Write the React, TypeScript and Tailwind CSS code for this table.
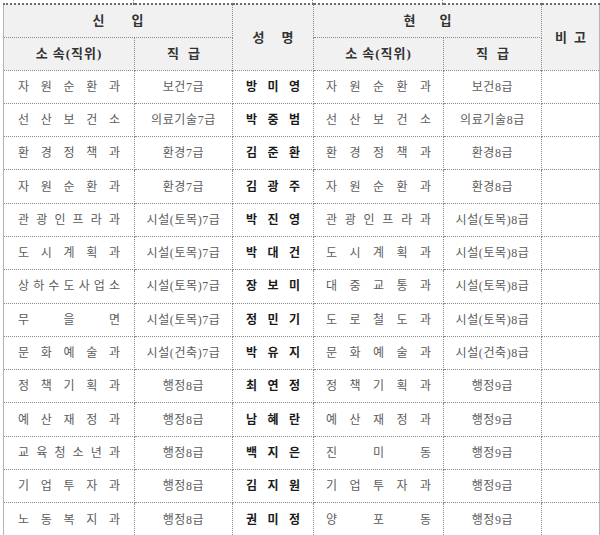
const rows = [
  ['자원순환과', '보건7급', '방미영', '자원순환과', '보건8급'],
  ['선산보건소', '의료기술7급', '박중범', '선산보건소', '의료기술8급'],
  ['환경정책과', '환경7급', '김준환', '환경정책과', '환경8급'],
  ['자원순환과', '환경7급', '김광주', '자원순환과', '환경8급'],
  ['관광인프라과', '시설(토목)7급', '박진영', '관광인프라과', '시설(토목)8급'],
  ['도시계획과', '시설(토목)7급', '박대건', '도시계획과', '시설(토목)8급'],
  ['상하수도사업소', '시설(토목)7급', '장보미', '대중교통과', '시설(토목)8급'],
  ['무을면', '시설(토목)7급', '정민기', '도로철도과', '시설(토목)8급'],
  ['문화예술과', '시설(건축)7급', '박유지', '문화예술과', '시설(건축)8급'],
  ['정책기획과', '행정8급', '최연정', '정책기획과', '행정9급'],
  ['예산재정과', '행정8급', '남혜란', '예산재정과', '행정9급'],
  ['교육청소년과', '행정8급', '백지은', '진미동', '행정9급'],
  ['기업투자과', '행정8급', '김지원', '기업투자과', '행정9급'],
  ['노동복지과', '행정8급', '권미정', '양포동', '행정9급'],
];

// spreads characters evenly across the cell, like hwp "배분 정렬"
function Spread({ text, className }: { text: string; className: string }) {
  return (
    <div className={'flex justify-between ' + className}>
      {text.split('').map((ch, i) => (
        <span key={i}>{ch}</span>
      ))}
    </div>
  );
}

const cell = 'border border-dotted border-[#8a8a8a] p-0 align-middle';
const head = cell + ' bg-[#f1f1f1] text-[13px] font-bold text-[#333] text-center';

export default function App() {
  return (
    <div
      className="w-[600px] h-[535px] bg-white overflow-hidden"
      style={{ fontFamily: "'Liberation Serif', 'Noto Sans CJK KR', serif" }}
    >
      <div className="flex h-[3px] pl-[3px]">
        <div className="w-[131px] border-r border-dotted border-[#8a8a8a]" />
        <div className="w-[179px] border-r border-dotted border-[#8a8a8a]" />
        <div className="w-[130px] border-r border-dotted border-[#8a8a8a]" />
      </div>
      <table className="ml-[3px] w-[596px] table-fixed border-collapse border-l border-r border-solid border-l-[#b4b4b4] border-r-[#b4b4b4]">
        <colgroup>
          <col className="w-[131px]" />
          <col className="w-[98px]" />
          <col className="w-[81px]" />
          <col className="w-[130px]" />
          <col className="w-[98px]" />
          <col className="w-[58px]" />
        </colgroup>
        <thead>
          <tr className="h-[33px]">
            <th colSpan={2} className={head + ' border-t-2 border-t-solid border-t-[#6e6e6e]'}>
              <span className="inline-flex gap-[27px]">
                <span>신</span>
                <span>입</span>
              </span>
            </th>
            <th rowSpan={2} className={head + ' border-t-2 border-t-solid border-t-[#6e6e6e]'}>
              <span className="inline-flex gap-[17px]">
                <span>성</span>
                <span>명</span>
              </span>
            </th>
            <th colSpan={2} className={head + ' border-t-2 border-t-solid border-t-[#6e6e6e]'}>
              <span className="inline-flex gap-[24px]">
                <span>현</span>
                <span>입</span>
              </span>
            </th>
            <th rowSpan={2} className={head + ' border-t-2 border-t-solid border-t-[#6e6e6e]'}>
              <span className="inline-flex gap-[7px]">
                <span>비</span>
                <span>고</span>
              </span>
            </th>
          </tr>
          <tr className="h-[33px]">
            <th className={head + ' tracking-[1px]'}>소 속(직위)</th>
            <th className={head}>
              <span className="inline-flex gap-[9px]">
                <span>직</span>
                <span>급</span>
              </span>
            </th>
            <th className={head + ' tracking-[1px]'}>소 속(직위)</th>
            <th className={head}>
              <span className="inline-flex gap-[9px]">
                <span>직</span>
                <span>급</span>
              </span>
            </th>
          </tr>
        </thead>
        <tbody className="text-[12px] text-[#5c5c5c]">
          {rows.map((r, i) => {
            const line = i === 7 ? ' border-b-dashed' : '';
            return (
              <tr key={i} className="h-[33.3px]">
                <td className={cell + line}>
                  <Spread text={r[0]} className="px-[14px]" />
                </td>
                <td className={cell + line + ' text-center tracking-[0.6px]'}>{r[1]}</td>
                <td className={cell + line + ' font-bold text-[#1a1a1a]'}>
                  <Spread text={r[2]} className="px-[13px]" />
                </td>
                <td className={cell + line}>
                  <Spread text={r[3]} className="px-[12px]" />
                </td>
                <td className={cell + line + ' text-center tracking-[0.6px]'}>{r[4]}</td>
                <td className={cell + line} />
              </tr>
            );
          })}
        </tbody>
      </table>
    </div>
  );
}
